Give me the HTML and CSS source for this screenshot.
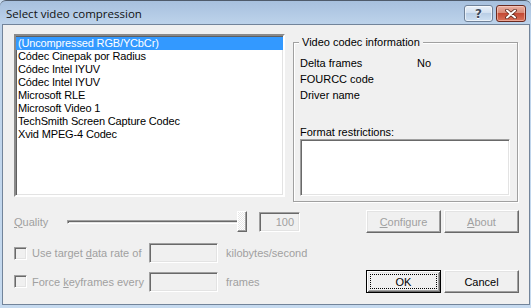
FILE: index.html
```html
<!DOCTYPE html>
<html>

<head>
    <title>Select video compression</title>
    <meta name="viewport" content="width=device-width, initial-scale=1.0">
    <link rel="stylesheet" href="styles.css">
</head>

<body>
    <div class="window">
        <div class="titlebar">
            <span class="title">Select video compression</span>
            <div class="caption-buttons">
                <span class="cap help">?</span>
                <span class="cap close">
                    <svg width="12" height="10" viewBox="0 0 12 10">
                        <path d="M2 1.5 L10 8.5 M10 1.5 L2 8.5" stroke="#5a2418" stroke-width="3.6" stroke-linecap="round" />
                        <path d="M2 1.5 L10 8.5 M10 1.5 L2 8.5" stroke="#fff" stroke-width="2" stroke-linecap="round" />
                    </svg>
                </span>
            </div>
        </div>

        <div class="client">
            <div class="top">
                <ul class="listbox">
                    <li class="selected">(Uncompressed RGB/YCbCr)</li>
                    <li>Códec Cinepak por Radius</li>
                    <li>Códec Intel IYUV</li>
                    <li>Códec Intel IYUV</li>
                    <li>Microsoft RLE</li>
                    <li>Microsoft Video 1</li>
                    <li>TechSmith Screen Capture Codec</li>
                    <li>Xvid MPEG-4 Codec</li>
                </ul>

                <fieldset class="group">
                    <legend>Video codec information</legend>
                    <div class="info-row"><span class="info-label">Delta frames</span><span>No</span></div>
                    <div class="info-row"><span class="info-label">FOURCC code</span><span></span></div>
                    <div class="info-row"><span class="info-label">Driver name</span><span></span></div>
                    <div class="restrict-label">Format restrictions:</div>
                    <div class="sunken restrict-box"></div>
                </fieldset>
            </div>

            <div class="row row-quality">
                <span class="disabled quality-label"><u>Q</u>uality</span>
                <div class="slider">
                    <div class="track"></div>
                    <div class="thumb"></div>
                </div>
                <div class="sunken edit edit-quality">100</div>
                <div class="btn-group">
                    <span class="btn disabled-btn"><u>C</u>onfigure</span>
                    <span class="btn disabled-btn"><u>A</u>bout</span>
                </div>
            </div>

            <div class="row row-rate">
                <span class="checkbox"></span>
                <span class="disabled check-label">Use target <u>d</u>ata rate of</span>
                <div class="sunken edit edit-wide"></div>
                <span class="disabled unit">kilobytes/second</span>
            </div>

            <div class="row row-keys">
                <span class="checkbox"></span>
                <span class="disabled check-label">Force <u>k</u>eyframes every</span>
                <div class="sunken edit edit-wide"></div>
                <span class="disabled unit">frames</span>
                <div class="btn-group">
                    <span class="btn default-btn"><span class="focus">OK</span></span>
                    <span class="btn">Cancel</span>
                </div>
            </div>
        </div>
    </div>
</body>

</html>
```

FILE: styles.css
```css
* {
    box-sizing: border-box;
    margin: 0;
    padding: 0;
}

body {
    width: 531px;
    height: 308px;
    overflow: hidden;
    font-family: "Liberation Sans", Arial, sans-serif;
    font-size: 11px;
    color: #000;
    background: #c8dbef;
}

.window {
    width: 531px;
    height: 308px;
    display: flex;
    flex-direction: column;
    background: linear-gradient(#a7c0de, #bcd2ea 22px, #c6daef);
    border-top: 1px solid #4f5b6b;
    border-radius: 6px 6px 0 0;
}

/* title bar */
.titlebar {
    height: 23px;
    display: flex;
    align-items: flex-start;
    padding-left: 6px;
}

.title {
    font-family: "Open Sans", "Liberation Sans", sans-serif;
    font-size: 11.5px;
    line-height: 16px;
    margin-top: 5px;
    color: #111;
}

.caption-buttons {
    margin-left: auto;
    margin-right: 5px;
    margin-top: 4px;
    display: flex;
    gap: 3px;
}

.cap {
    height: 17px;
    border-radius: 3px;
    display: flex;
    align-items: center;
    justify-content: center;
}

.help {
    width: 29px;
    border: 1px solid #6f8198;
    background: linear-gradient(#eaf1f9, #d2e0f0 45%, #b9cee6 50%, #cfe0f2);
    box-shadow: inset 0 0 0 1px rgba(255, 255, 255, 0.6);
    font-family: "DejaVu Sans", sans-serif;
    font-weight: bold;
    font-size: 12px;
    color: #3e4a5a;
    text-shadow: 0 1px 0 #fff;
}

.close {
    width: 30px;
    border: 1px solid #6a2a20;
    background: linear-gradient(#eab0a3, #d88a77 45%, #c44a35 50%, #d9735b);
    box-shadow: inset 0 0 0 1px rgba(255, 220, 210, 0.5);
}

/* client area */
.client {
    flex: 1;
    margin: 0 1px 3px 2px;
    border: 1px solid #72849a;
    background: #f0f0f0;
    padding: 9px 10px 0 11px;
}

.top {
    display: flex;
    align-items: flex-start;
}

.sunken {
    border: 1px solid;
    border-color: #a0a0a0 #fff #fff #a0a0a0;
    box-shadow: inset 1px 1px #696969, inset -1px -1px #e3e3e3;
}

.listbox {
    width: 271px;
    height: 163px;
    list-style: none;
    background: #fff;
    border: 2px solid;
    border-color: #8a8a8a #fff #fff #8a8a8a;
    box-shadow: inset 1px 1px #5f5f5f, inset -1px -1px #e3e3e3;
    padding-top: 1px;
}

.listbox li {
    height: 13px;
    line-height: 13px;
    padding-left: 2px;
    white-space: nowrap;
    letter-spacing: -0.15px;
}

.listbox .selected {
    background: #3399ff;
    color: #fff;
}

.group {
    width: 225px;
    margin-left: 8px;
    margin-top: 2px;
    border: 1px solid #a0a0a0;
    box-shadow: inset 1px 1px #fff, 1px 1px #fff;
    padding: 6px 7px 5px 5px;
}

.group legend {
    padding: 0 3px;
    line-height: 13px;
    background: #f0f0f0;
}

.info-row {
    display: flex;
    height: 16px;
    line-height: 16px;
    padding-left: 1px;
}

.info-label {
    width: 117px;
}

.restrict-label {
    margin-top: 23px;
    line-height: 13px;
    padding-left: 1px;
}

.restrict-box {
    width: 210px;
    height: 57px;
    background: #fff;
    margin-left: 1px;
}

/* bottom rows */
.row {
    display: flex;
    align-items: center;
}

.row-quality {
    height: 23px;
    margin-top: 8px;
}

.row-rate {
    height: 20px;
    margin-top: 10px;
}

.row-keys {
    height: 23px;
    margin-top: 7px;
}

.disabled {
    color: #a0a0a0;
}

.quality-label {
    width: 52px;
}

.slider {
    width: 181px;
    height: 21px;
    display: flex;
    align-items: center;
}

.track {
    width: 171px;
    height: 4px;
    border: 1px solid;
    border-color: #a0a0a0 #fff #fff #a0a0a0;
    box-shadow: inset 1px 1px #696969, inset -1px -1px #e3e3e3;
    margin-left: 1px;
}

.thumb {
    width: 10px;
    height: 21px;
    margin-left: -1px;
    border: 1px solid;
    border-color: #fff #696969 #696969 #fff;
    box-shadow: inset -1px -1px #a0a0a0;
    background: repeating-conic-gradient(#fff 0 25%, #e6e6e6 0 50%) 0 0 / 2px 2px;
}

.edit {
    height: 20px;
    background: #f0f0f0;
}

.edit-quality {
    width: 41px;
    margin-left: 12px;
    text-align: right;
    padding-right: 5px;
    line-height: 18px;
    color: #a0a0a0;
}

.checkbox {
    width: 13px;
    height: 13px;
    border: 1px solid;
    border-color: #a0a0a0 #fff #fff #a0a0a0;
    box-shadow: inset 1px 1px #696969, inset -1px -1px #e3e3e3;
    background: #f0f0f0;
}

.check-label {
    width: 117px;
    margin-left: 5px;
    white-space: nowrap;
}

.edit-wide {
    width: 69px;
}

.unit {
    margin-left: 8px;
}

.btn-group {
    margin-left: auto;
    display: flex;
    gap: 3px;
}

.btn {
    width: 75px;
    height: 23px;
    display: flex;
    align-items: center;
    justify-content: center;
    border: 1px solid;
    border-color: #fff #696969 #696969 #fff;
    box-shadow: inset -1px -1px #a0a0a0, inset 1px 1px #e3e3e3;
    background: #f0f0f0;
}

.disabled-btn {
    color: #a0a0a0;
}

.default-btn {
    border: 1px solid #000;
    box-shadow: inset 1px 1px #fff, inset -1px -1px #696969, inset 2px 2px #e3e3e3, inset -2px -2px #a0a0a0;
    padding: 3px;
}

.focus {
    flex: 1;
    align-self: stretch;
    display: flex;
    align-items: center;
    justify-content: center;
    border: 1px dotted #000;
}
```
